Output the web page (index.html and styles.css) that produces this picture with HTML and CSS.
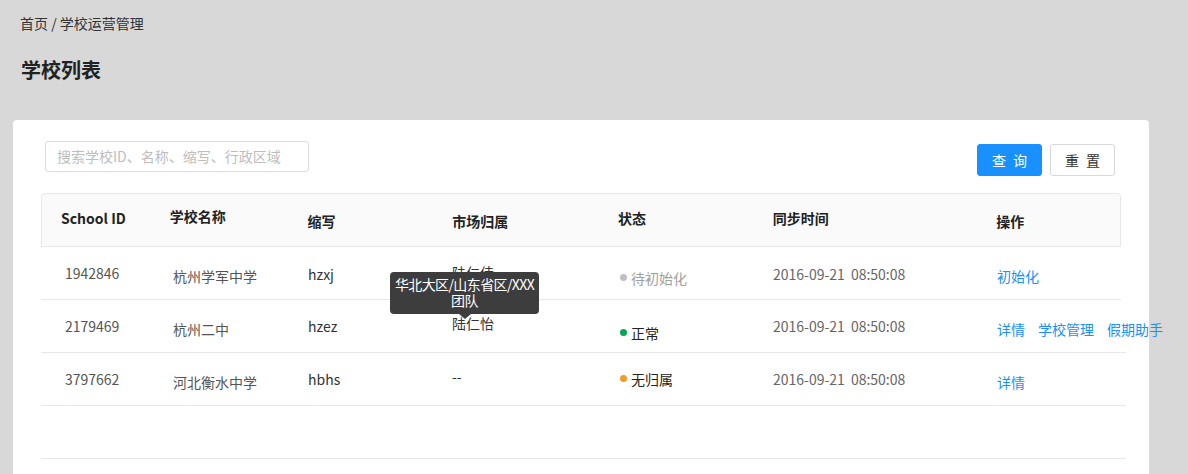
FILE: index.html
```html
<!DOCTYPE html>
<html lang="zh-CN">
<head>
<meta charset="utf-8">
<title>学校列表</title>
<link rel="stylesheet" href="styles.css">
</head>
<body>
<div class="page">
  <div class="breadcrumb">首页 / 学校运营管理</div>
  <h1 class="title">学校列表</h1>
  <div class="card">
    <div class="toolbar">
      <div class="search">搜索学校ID、名称、缩写、行政区域</div>
      <div class="btns">
        <button class="btn primary">查 询</button>
        <button class="btn">重 置</button>
      </div>
    </div>
    <div class="table">
      <div class="thead">
        <div class="c c1 h1">School ID</div>
        <div class="c c2 h2">学校名称</div>
        <div class="c c3 h3">缩写</div>
        <div class="c c4 h3">市场归属</div>
        <div class="c c5 h1">状态</div>
        <div class="c c6 h1">同步时间</div>
        <div class="c c7 h3">操作</div>
      </div>
      <div class="row narrow">
        <div class="c c1 d-id">1942846</div>
        <div class="c c2 d-name">杭州学军中学</div>
        <div class="c c3 d-abbr first">hzxj</div>
        <div class="c c4 d-mkt first tipped">陆仁佳
          <div class="tooltip">华北大区/山东省区/XXX<br>团队</div>
        </div>
        <div class="c c5 st-1"><span class="status grey"><i class="dot"></i>待初始化</span></div>
        <div class="c c6 d-date first">2016-09-21<span class="time">08:50:08</span></div>
        <div class="c c7 d-ops"><a class="link">初始化</a></div>
      </div>
      <div class="row">
        <div class="c c1 d-id">2179469</div>
        <div class="c c2 d-name">杭州二中</div>
        <div class="c c3 d-abbr">hzez</div>
        <div class="c c4 d-mkt">陆仁怡</div>
        <div class="c c5 st-2"><span class="status"><i class="dot green"></i>正常</span></div>
        <div class="c c6 d-date">2016-09-21<span class="time">08:50:08</span></div>
        <div class="c c7 d-ops"><a class="link">详情</a><a class="link">学校管理</a><a class="link">假期助手</a></div>
      </div>
      <div class="row">
        <div class="c c1 d-id">3797662</div>
        <div class="c c2 d-name">河北衡水中学</div>
        <div class="c c3 d-abbr">hbhs</div>
        <div class="c c4 d-mkt">--</div>
        <div class="c c5 st-3"><span class="status"><i class="dot orange"></i>无归属</span></div>
        <div class="c c6 d-date">2016-09-21<span class="time">08:50:08</span></div>
        <div class="c c7 d-ops"><a class="link">详情</a></div>
      </div>
      <div class="row empty"></div>
    </div>
  </div>
</div>
</body>
</html>
```
FILE: styles.css
```css
* { box-sizing: border-box; }
html, body { margin: 0; padding: 0; }
body {
  background: #d8d8d8;
  font-family: "Noto Sans CJK SC", "Liberation Sans", sans-serif;
  font-size: 14px;
  color: #333;
  overflow: hidden;
}
.page { padding: 13px 0 0 0; }
.breadcrumb {
  padding: 0 20px;
  line-height: 20px;
  height: 20px;
  color: #333;
  font-size: 14px;
}
.title {
  margin: 23px 0 0 0;
  padding: 0 21px;
  font-size: 20px;
  line-height: 28px;
  height: 28px;
  font-weight: 700;
  color: #222;
}
.card {
  margin: 36px 0 0 13px;
  width: 1136px;
  min-height: 420px;
  background: #fff;
  border-radius: 4px 4px 0 0;
  padding: 21px 28px 0 28px;
}
.toolbar {
  display: flex;
  justify-content: space-between;
  align-items: flex-start;
  padding: 0 6px 0 4px;
}
.search {
  width: 264px;
  height: 31px;
  border: 1px solid #dcdcdc;
  border-radius: 3px;
  padding: 0 11px;
  line-height: 29px;
  color: #bdbdbd;
  font-size: 14px;
}
.btns {
  display: flex;
  gap: 8px;
  margin-top: 3px;
}
.btn {
  width: 65px;
  height: 32px;
  border: 1px solid #d9d9d9;
  border-radius: 3px;
  background: #fff;
  color: #333;
  font-family: inherit;
  font-size: 14px;
  letter-spacing: 2px;
  padding: 0 0 0 2px;
}
.btn.primary {
  background: #1890ff;
  border-color: #1890ff;
  color: #fff;
}
.table { width: 1080px; margin-top: 17px; }
.thead {
  display: flex;
  height: 54px;
  background: #fafafa;
  border: 1px solid #e8e8e8;
  border-radius: 4px 4px 0 0;
  font-weight: 700;
  color: #222;
}
.row {
  display: flex;
  height: 53px;
  border-bottom: 1px solid #e8e8e8;
  width: 1085px;
}
.row.narrow { width: 1080px; }
.c { line-height: 20px; white-space: nowrap; }
.c1 { width: 128px; }
.c2 { width: 138px; }
.c3 { width: 145px; }
.c4 { width: 166px; }
.c5 { width: 155px; }
.c6 { width: 224px; }
.c7 { width: 124px; }
.thead .c1 { padding-left: 19px; }
.h1 { padding-top: 14px; }
.h2 { padding-top: 12px; }
.h3 { padding-top: 17px; }

.d-id { padding: 16px 0 0 24px; color: #555; }
.d-name { padding: 19px 0 0 4px; color: #555; }
.d-abbr { padding: 16px 0 0 1px; color: #333; }
.d-abbr.first { padding-top: 17px; }
.d-mkt { padding-top: 13px; color: #333; }
.d-mkt.first { padding-top: 15px; }
.d-date { padding-top: 16px; color: #666; }
.d-date.first { padding-top: 17px; }
.time { margin-left: 6px; }
.d-ops { padding-top: 19px; display: flex; gap: 13px; overflow: visible; }
.st-1 { padding: 18px 0 0 2px; }
.st-2 { padding: 20px 0 0 2px; }
.st-3 { padding: 13px 0 0 2px; }
.status { display: inline-flex; align-items: center; gap: 4px; color: #222; }
.status.grey { color: #a0a0a0; }
.dot {
  display: inline-block;
  width: 7px;
  height: 7px;
  border-radius: 50%;
  background: #bfbfbf;
}
.dot.green { background: #00a854; }
.dot.orange { background: #f59a23; }
.link { color: #1890ff; text-decoration: none; }

.tipped { position: relative; }
.tooltip {
  position: absolute;
  left: -62px;
  top: 25px;
  width: 149px;
  padding: 4px 2px 6px;
  background: #3d3d3d;
  color: #fff;
  border-radius: 4px;
  text-align: center;
  line-height: 16px;
  font-size: 14px;
  white-space: nowrap;
  letter-spacing: -0.6px;
  z-index: 2;
}
.tooltip::after {
  content: "";
  position: absolute;
  left: 69px;
  bottom: -5px;
  border-left: 6px solid transparent;
  border-right: 6px solid transparent;
  border-top: 5px solid #3d3d3d;
}
```
